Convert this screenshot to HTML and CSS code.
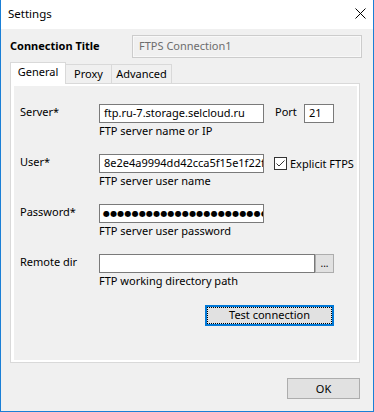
FILE: index.html
```html
<!DOCTYPE html>
<html>
<head>
<meta charset="utf-8">
<link rel="stylesheet" href="styles.css">
</head>
<body>
<div class="window">
  <div class="titlebar">
    <span class="title">Settings</span>
    <svg class="close" width="11" height="11" viewBox="0 0 11 11"><path d="M0.5 0.5L10.5 10.5M10.5 0.5L0.5 10.5" stroke="#000" stroke-width="1" fill="none"/></svg>
  </div>
  <div class="body">
    <div class="conn-row">
      <span class="conn-label">Connection Title</span>
      <div class="conn-input">FTPS Connection1</div>
    </div>
    <div class="tabs">
      <div class="tab active">General</div>
      <div class="tab tab-proxy">Proxy</div>
      <div class="tab tab-adv">Advanced</div>
    </div>
    <div class="panel">
      <div class="page">
        <div class="frow">
          <span class="lbl">Server*</span>
          <div class="field">
            <div class="line">
              <div class="input w-main">ftp.ru-7.storage.selcloud.ru</div>
              <span class="port-lbl">Port</span>
              <div class="input w-port">21</div>
            </div>
            <div class="hint">FTP server name or IP</div>
          </div>
        </div>
        <div class="frow">
          <span class="lbl">User*</span>
          <div class="field">
            <div class="line">
              <div class="input w-main">8e2e4a9994dd42cca5f15e1f22f0b3a1</div>
              <svg class="check" width="13" height="13" viewBox="0 0 13 13"><rect x="0.5" y="0.5" width="12" height="12" fill="#fff" stroke="#333"/><path d="M2.5 6.5L5 9L10.5 3.5" stroke="#333" stroke-width="1" fill="none"/></svg>
              <span class="check-lbl">Explicit FTPS</span>
            </div>
            <div class="hint">FTP server user name</div>
          </div>
        </div>
        <div class="frow">
          <span class="lbl">Password*</span>
          <div class="field">
            <div class="line">
              <div class="input w-main dots">●●●●●●●●●●●●●●●●●●●●●●●●●●●●●●●●●●●●●●</div>
            </div>
            <div class="hint">FTP server user password</div>
          </div>
        </div>
        <div class="frow">
          <span class="lbl">Remote dir</span>
          <div class="field">
            <div class="line">
              <div class="input w-dir"></div>
              <div class="browse">...</div>
            </div>
            <div class="hint">FTP working directory path</div>
          </div>
        </div>
        <div class="actions">
          <div class="btn-test">Test connection</div>
        </div>
      </div>
    </div>
    <div class="footer">
      <div class="btn-ok">OK</div>
    </div>
  </div>
</div>
</body>
</html>
```
FILE: styles.css
```css
html, body {
  margin: 0;
  padding: 0;
  background: #f0f0f0;
}
body {
  font-family: "Noto Sans", "DejaVu Sans", sans-serif;
  font-size: 11px;
  color: #000;
}
.window {
  width: 374px;
  height: 412px;
  box-sizing: border-box;
  border: 1px solid #1a7fd6;
  border-top: 0;
  background: #f0f0f0;
  display: flex;
  flex-direction: column;
}
.titlebar {
  height: 29px;
  flex: none;
  background: #fff;
  display: flex;
  align-items: center;
  justify-content: space-between;
  padding: 0 7px 3px 7px;
  box-sizing: border-box;
}
.title {
  font-size: 11.5px;
  line-height: 15px;
}
.close {
  display: block;
}
.body {
  width: 350px;
  padding: 6px 0 0 9px;
  display: flex;
  flex-direction: column;
}
.conn-row {
  display: flex;
  align-items: center;
  height: 23px;
}
.conn-label {
  width: 122px;
  flex: none;
  font-weight: bold;
  line-height: 15px;
  margin-top: -2px;
}
.conn-input {
  width: 230px;
  height: 23px;
  flex: none;
  box-sizing: border-box;
  margin-right: -2px;
  border: 1px solid #cccccc;
  box-shadow: inset 0 0 0 1px #f8f8f8;
  background: #f0f0f0;
  color: #6d6d6d;
  padding-left: 6px;
  line-height: 20px;
}
.tabs {
  margin-top: 4px;
  height: 21px;
  display: flex;
  align-items: flex-end;
  position: relative;
  z-index: 1;
}
.tab {
  box-sizing: border-box;
  height: 19px;
  border: 1px solid #d9d9d9;
  border-bottom: 0;
  background: #f0f0f0;
  text-align: center;
  line-height: 18px;
}
.tab.active {
  width: 56px;
  height: 22px;
  margin-bottom: -1px;
  background: #fff;
}
.tab-proxy {
  width: 46px;
  border-left: 0;
}
.tab-adv {
  width: 60px;
  border-left: 0;
}
.panel {
  height: 280px;
  box-sizing: border-box;
  border: 1px solid #d9d9d9;
  background: #fff;
  padding: 2px 2px 2px 3px;
}
.page {
  height: 100%;
  background: #f0f0f0;
  box-sizing: border-box;
  padding: 18px 0 0 6px;
  display: flex;
  flex-direction: column;
  gap: 16px;
}
.frow {
  display: flex;
}
.lbl {
  width: 79px;
  flex: none;
  line-height: 15px;
}
.field {
  width: 235px;
  flex: none;
}
.line {
  display: flex;
  align-items: center;
  height: 19px;
}
.input {
  box-sizing: border-box;
  height: 19px;
  flex: none;
  border: 1px solid #7a7a7a;
  background: #fff;
  padding-left: 4px;
  line-height: 16px;
  white-space: nowrap;
  overflow: hidden;
}
.w-main {
  width: 165px;
}
.w-port {
  width: 30px;
}
.w-dir {
  width: 216px;
}
.port-lbl {
  align-self: flex-start;
  margin-left: 11px;
  width: 29px;
  line-height: 15px;
}
.check {
  display: block;
  margin-left: 10px;
  flex: none;
}
.check-lbl {
  flex: none;
  white-space: nowrap;
  margin-left: 3px;
  line-height: 15px;
}
.dots {
  font-family: "DejaVu Sans", sans-serif;
  font-size: 8px;
  line-height: 17px;
  letter-spacing: 0.2px;
  padding-left: 3px;
}
.browse {
  box-sizing: border-box;
  width: 19px;
  height: 19px;
  border: 1px solid #adadad;
  background: #e1e1e1;
  text-align: center;
  line-height: 16px;
  font-size: 10px;
}
.hint {
  line-height: 15px;
}
.actions {
  display: flex;
  justify-content: flex-end;
  width: 314px;
  margin-top: 1px;
}
.btn-test {
  box-sizing: border-box;
  width: 129px;
  height: 21px;
  border: 2px solid #0078d7;
  background: #e1e1e1;
  outline: 1px dotted #000;
  outline-offset: -3px;
  text-align: center;
  line-height: 16px;
}
.footer {
  display: flex;
  justify-content: flex-end;
  margin-top: 15px;
}
.btn-ok {
  box-sizing: border-box;
  width: 73px;
  height: 21px;
  border: 1px solid #adadad;
  background: #e1e1e1;
  text-align: center;
  line-height: 19px;
}
```
